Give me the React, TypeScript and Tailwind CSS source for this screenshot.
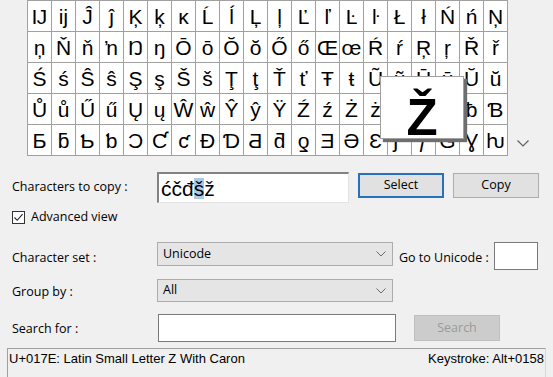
import React from "react";

const chars = Array.from({ length: 100 }, (_, i) => String.fromCodePoint(0x132 + i));

function Chevron() {
  return (
    <svg width="10" height="6" viewBox="0 0 10 6" fill="none">
      <path d="M0.5 0.5 L5 5 L9.5 0.5" stroke="#6b6b6b" strokeWidth="1" />
    </svg>
  );
}

export default function App() {
  return (
    <div className="w-[553px] h-[377px] bg-[#f0f0f0] flex flex-col overflow-hidden text-black font-['Open_Sans',sans-serif] text-[12.5px]">
      {/* Character grid */}
      <div className="flex h-[156px] shrink-0">
        <div className="ml-[27px] relative">
          <div className="grid grid-cols-[repeat(20,23px)] grid-rows-[repeat(5,30px)] gap-px p-px bg-[#a0a0a0]">
            {chars.map((c, i) => (
              <div
                key={i}
                className="bg-white flex items-center justify-center font-['Liberation_Sans',Arial,sans-serif] text-[21px] leading-none"
              >
                {c}
              </div>
            ))}
          </div>
          <div className="absolute left-[353px] top-[76px] w-[84px] h-[63px] bg-white border border-[#a0a0a0] shadow-[3px_3px_1px_#6e6e6e] flex items-start justify-center pt-[15px] font-['Liberation_Sans',Arial,sans-serif] font-bold text-[51px] leading-none">
            Ž
          </div>
        </div>
        <div className="flex-1 flex items-end pl-[9px] pb-[9px]">
          <svg width="12" height="7" viewBox="0 0 12 7" fill="none">
            <path d="M0.5 0.5 L6 6 L11.5 0.5" stroke="#606060" strokeWidth="1.2" />
          </svg>
        </div>
      </div>

      {/* Characters to copy */}
      <div className="mt-[16px] h-[31px] flex items-start shrink-0">
        <div className="w-[157px] pl-[12px] h-full flex items-center">Characters to copy :</div>
        <div className="w-[192px] h-[31px] bg-white border-solid border-t-2 border-l-2 border-r border-b border-t-[#828282] border-l-[#828282] border-r-[#e3e3e3] border-b-[#e3e3e3] flex items-center pl-[2px] font-['Liberation_Sans',Arial,sans-serif] text-[21px] leading-none">
          <span>ćčđ</span>
          <span className="bg-[#a9cbe9]">š</span>
          <span>ž</span>
        </div>
        <div className="mt-[1px] ml-[9px] w-[86px] h-[25px] border-2 border-[#2672be] bg-[#e1e1e1] flex items-center justify-center">
          Select
        </div>
        <div className="mt-[1px] ml-[9px] w-[86px] h-[25px] border border-[#adadad] bg-[#e1e1e1] flex items-center justify-center">
          Copy
        </div>
      </div>

      {/* Advanced view */}
      <div className="mt-[8px] pl-[12px] flex items-center h-[13px] shrink-0">
        <div className="w-[13px] h-[13px] border border-[#333333] bg-white flex items-center justify-center">
          <svg width="11" height="11" viewBox="0 0 11 11" fill="none">
            <path d="M1.5 5.5 L4.2 8.3 L9.6 2.2" stroke="#222" strokeWidth="1.1" />
          </svg>
        </div>
        <span className="ml-[6px]">Advanced view</span>
      </div>

      {/* Character set */}
      <div className="mt-[18px] h-[28px] flex items-start shrink-0">
        <div className="w-[157px] pl-[12px] h-full pt-[4px] flex items-center">Character set :</div>
        <div className="w-[236px] h-[24px] bg-[#e5e5e5] border border-[#acacac] flex items-center justify-between pl-[5px] pr-[6px]">
          <span>Unicode</span>
          <Chevron />
        </div>
        <div className="ml-[6px] w-[95px] h-full pt-[4px] flex items-center">Go to Unicode :</div>
        <div className="w-[44px] h-[28px] bg-white border border-[#7a7a7a]" />
      </div>

      {/* Group by */}
      <div className="mt-[9px] h-[23px] flex items-start shrink-0">
        <div className="w-[157px] pl-[12px] h-full pt-[4px] flex items-center">Group by :</div>
        <div className="w-[236px] h-[23px] bg-[#e5e5e5] border border-[#acacac] flex items-center justify-between pl-[5px] pr-[6px]">
          <span>All</span>
          <Chevron />
        </div>
      </div>

      {/* Search for */}
      <div className="mt-[12px] h-[28px] flex items-start shrink-0">
        <div className="w-[157px] pl-[12px] h-full pt-[2px] flex items-center">Search for :</div>
        <div className="ml-[1px] w-[238px] h-[28px] bg-white border border-[#7a7a7a]" />
        <div className="ml-[18px] mt-[1px] w-[86px] h-[26px] bg-[#cccccc] border border-[#bfbfbf] text-[#9a9a9a] flex items-center justify-center">
          Search
        </div>
      </div>

      {/* Status bar */}
      <div className="mt-[6px] flex-1 flex">
        <div className="ml-[7px] w-[539px] border-t border-l border-r border-t-[#a0a0a0] border-l-[#a0a0a0] border-r-[#d8d8d8] flex justify-between items-start pt-[2px] pl-[1px] pr-[1px] font-['Liberation_Sans',Arial,sans-serif] text-[13px] leading-[15px]">
          <span>U+017E: Latin Small Letter Z With Caron</span>
          <span>Keystroke: Alt+0158</span>
        </div>
      </div>
    </div>
  );
}
